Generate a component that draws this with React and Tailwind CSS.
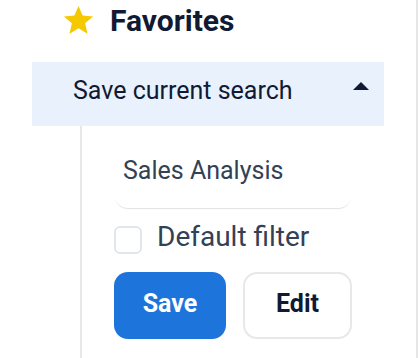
export default function App() {
  return (
    <div
      className="w-[418px] h-[358px] bg-white border-r-2 border-[#e6e6e6] flex flex-col overflow-hidden"
      style={{ fontFamily: 'Roboto, "Noto Sans", sans-serif' }}
    >
      <div className="flex items-start pl-[61px] pt-[3px] gap-[14px] h-[62px]">
        <svg width="35" height="35" viewBox="0 0 24 24" className="shrink-0">
          <path
            fill="#f5c800"
            d="M12 17.27L18.18 21l-1.64-7.03L22 9.24l-7.19-.61L12 2 9.19 8.63 2 9.24l5.46 4.73L5.82 21z"
          />
        </svg>
        <span className="text-[30px] leading-[36px] font-bold text-[#111a33]">Favorites</span>
      </div>
      <div className="ml-[32px] w-[352px] h-[64px] bg-[#e9f1fd] flex items-start justify-between pl-[41px] pr-[15px] pt-[14px]">
        <span className="text-[25px] leading-[30px] text-[#111a33]">Save current search</span>
        <svg width="16" height="8" viewBox="0 0 16 8" className="mt-[6px]">
          <path d="M0 8 L8 0 L16 8 Z" fill="#111a33" />
        </svg>
      </div>
      <div className="ml-[80px] flex-1 border-l-2 border-[#e5e7eb] pl-[32px] pt-[8px] flex flex-col">
        <div className="w-[238px] h-[74px] rounded-[14px] bg-white shadow-[0_2px_1px_-1px_rgba(0,0,0,0.12)] flex items-center pl-[9px]">
          <span className="text-[25px] leading-[30px] text-[#334155]">Sales Analysis</span>
        </div>
        <div className="mt-[18px] flex items-start gap-[15px] h-[28px]">
          <div className="w-[28px] h-[28px] rounded-[6px] border-2 border-[#e2e5ea] bg-white shrink-0" />
          <span className="text-[28px] leading-[24px] text-[#334155] -mt-[1px]">Default filter</span>
        </div>
        <div className="mt-[18px] flex gap-[17px]">
          <button className="w-[112px] h-[67px] rounded-[14px] bg-[#1d74db] text-white text-[25px] font-bold flex items-center justify-center pb-[4px]">
            Save
          </button>
          <button className="w-[109px] h-[67px] rounded-[14px] border-2 border-[#e7e8ea] bg-white text-[#111a33] text-[25px] font-bold flex items-center justify-center pb-[4px]">
            Edit
          </button>
        </div>
      </div>
    </div>
  );
}
